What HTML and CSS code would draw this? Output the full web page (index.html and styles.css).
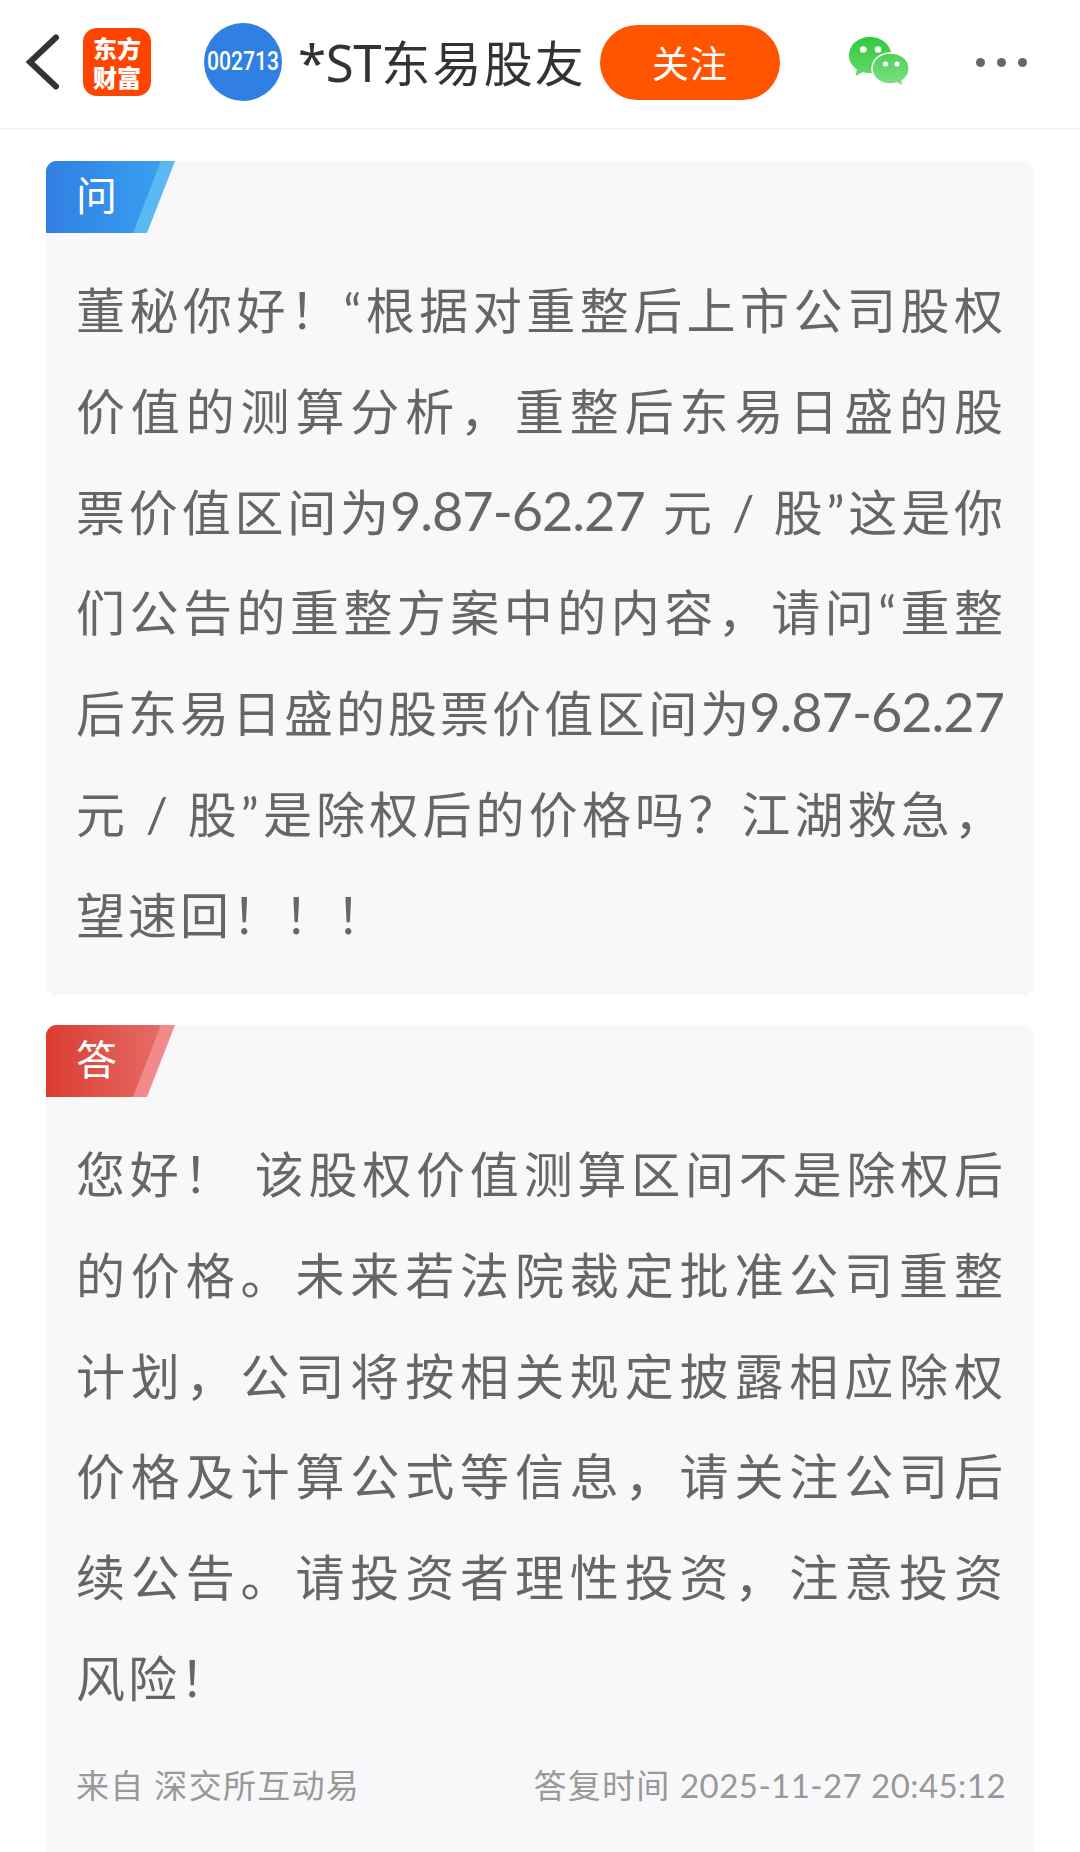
FILE: index.html
```html
<!DOCTYPE html>
<html lang="zh-CN">
<head>
  <meta charset="UTF-8">
  <title>*ST东易股友</title>
  <link rel="stylesheet" href="styles.css">
</head>
<body>
  <header class="topbar">
    <svg class="back" width="36" height="60" viewBox="0 0 36 60"><path d="M31 5.500 5 30l26 24.500" fill="none" stroke="#333" stroke-width="6" stroke-linecap="round" stroke-linejoin="miter"/></svg>
    <div class="logo"><span>东方</span><span>财富</span></div>
    <div class="avatar">
      <svg width="78" height="78" viewBox="0 0 78 78"><text x="3" y="47" textLength="72" lengthAdjust="spacingAndGlyphs">002713</text></svg>
    </div>
    <h1 class="name"><span class="st">*ST</span>东易股友</h1>
    <button class="follow">关注</button>
    <svg class="wechat" width="64" height="54" viewBox="0 0 64 54">
      <defs>
        <linearGradient id="g1" x1="0" y1="0" x2="0" y2="1"><stop offset="0" stop-color="#2fcb3c"/><stop offset="1" stop-color="#66d86c"/></linearGradient>
        <linearGradient id="g2" x1="0" y1="0" x2="0" y2="1"><stop offset="0" stop-color="#4fd05a"/><stop offset="1" stop-color="#7fe083"/></linearGradient>
      </defs>
      <path d="M23 2C11 2 2 10 2 20.500c0 6 3 10.500 8 14L8.500 41l7.500-4c2.500.7 4.500 1 7 1 12 0 21.500-7.500 21.500-17.500S35 2 23 2Z" fill="url(#g1)"/>
      <circle cx="16.300" cy="14.500" r="3.300" fill="#fff"/><circle cx="31" cy="14.500" r="3.300" fill="#fff"/>
      <path d="M43.500 18C33 18 25 24.800 25 33.500S33 49 43.500 49c2.300 0 4.300-.4 6.500-1l6.500 3.500-1.300-5.700c4.300-3 7-7.300 7-12.300C62.200 24.800 54 18 43.500 18Z" fill="url(#g2)" stroke="#fff" stroke-width="1.500"/>
      <circle cx="38.500" cy="29" r="2.600" fill="#fff"/><circle cx="50" cy="29" r="2.600" fill="#fff"/>
    </svg>
    <div class="more"><i></i><i></i><i></i></div>
  </header>

  <main>
    <section class="card">
      <svg class="tag" width="130" height="72" viewBox="0 0 130 72">
        <defs><linearGradient id="ask"><stop offset="0" stop-color="#317fe3"/><stop offset="1" stop-color="#389ff0"/></linearGradient></defs>
        <path d="M0 0h129l-28 72H0Z" fill="#5cb8f0"/><path d="M0 0h115L87 72H0Z" fill="url(#ask)"/>
        <text x="30" y="50">问</text>
      </svg>
      <div class="text">
        <p>董秘你好！“根据对重整后上市公司股权</p>
        <p>价值的测算分析，重整后东易日盛的股</p>
        <p>票价值区间为<span class="num">9.87-62.27</span> 元 / 股”这是你</p>
        <p>们公告的重整方案中的内容，请问“重整</p>
        <p>后东易日盛的股票价值区间为<span class="num">9.87-62.27</span></p>
        <p>元 / 股”是除权后的价格吗？江湖救急，</p>
        <p class="last">望速回！！！</p>
      </div>
    </section>

    <section class="card answer">
      <svg class="tag" width="130" height="72" viewBox="0 0 130 72">
        <defs><linearGradient id="ans"><stop offset="0" stop-color="#dc3c30"/><stop offset="1" stop-color="#e56c67"/></linearGradient></defs>
        <path d="M0 0h129l-28 72H0Z" fill="#f28a8b"/><path d="M0 0h115L87 72H0Z" fill="url(#ans)"/>
        <text x="30" y="50">答</text>
      </svg>
      <div class="text">
        <p>您好！ 该股权价值测算区间不是除权后</p>
        <p>的价格。未来若法院裁定批准公司重整</p>
        <p>计划，公司将按相关规定披露相应除权</p>
        <p>价格及计算公式等信息，请关注公司后</p>
        <p>续公告。请投资者理性投资，注意投资</p>
        <p class="last">风险！</p>
      </div>
      <footer class="meta">
        <span class="from">来自 深交所互动易</span>
        <span class="time">答复时间 <span class="date">2025-11-27 20:45:12</span></span>
      </footer>
    </section>
  </main>
</body>
</html>
```
FILE: styles.css
```css
* {
  box-sizing: border-box;
}

body {
  margin: 0;
  height: 1852px;
  overflow: hidden;
  background: #fff;
  color: #666;
  font-family: Lato, "Noto Sans CJK SC", sans-serif;
}

.topbar {
  display: flex;
  align-items: center;
  height: 130px;
  padding: 0 52px 4px 25px;
  border-bottom: 2px solid #f5f5f5;
}

.topbar > * {
  flex-shrink: 0;
}

.logo {
  display: flex;
  flex-direction: column;
  align-items: center;
  justify-content: center;
  width: 68px;
  height: 68px;
  margin-left: 22px;
  border-radius: 14px;
  background: #ff4400;
  color: #fff;
  font: 900 24px/29px "Noto Sans CJK SC", sans-serif;
}

.avatar {
  width: 78px;
  height: 78px;
  margin-left: 53px;
  border-radius: 50%;
  background: #307fe2;
}

.avatar text {
  fill: #fff;
  font: 500 26px Roboto, sans-serif;
}

.name {
  width: 302px;
  margin: 0 0 0 16px;
  color: #333;
  font-size: 49px;
  font-weight: 400;
  line-height: 70px;
  letter-spacing: 2.2px;
  white-space: nowrap;
}

.st {
  font-family: "Noto Sans", sans-serif;
  font-size: 51px;
  letter-spacing: -0.4px;
}

.follow {
  width: 180px;
  height: 75px;
  padding: 0;
  border: none;
  border-radius: 38px;
  background: #ff5500;
  color: #fff;
  font: 400 37px/75px "Noto Sans CJK SC", sans-serif;
  letter-spacing: 1px;
}

.wechat {
  margin-left: 67px;
}

.more {
  display: flex;
  gap: 12px;
  margin-left: 65px;
}

.more i {
  width: 9px;
  height: 9px;
  border-radius: 50%;
  background: #666;
}

main {
  display: flex;
  flex-direction: column;
  gap: 30px;
  padding: 31px 46px 0;
}

.card {
  height: 834px;
  border-radius: 11px;
  background: #f8f8fa;
  overflow: hidden;
}

.answer {
  height: 900px;
}

.tag {
  display: block;
}

.tag text {
  fill: #fff;
  font: 400 41px "Noto Sans CJK SC", sans-serif;
}

.text {
  padding: 27px 28px 0 30px;
  font-size: 49px;
  line-height: 100.8px;
  letter-spacing: 3px;
}

.text p {
  height: 100.8px;
  margin: 0;
  text-align: justify;
  text-align-last: justify;
  white-space: nowrap;
}

.text .last {
  text-align-last: left;
}

.num {
  margin: 0 2px 0 -3px;
  font-size: 54px;
  line-height: 1;
  letter-spacing: -1px;
}

.meta {
  display: flex;
  justify-content: space-between;
  padding: 31px 28px 0 30px;
  color: #999;
  font-size: 33px;
  line-height: 50px;
}

.from {
  letter-spacing: 1.3px;
}

.time {
  letter-spacing: 1.2px;
}

.date {
  letter-spacing: 0.45px;
}
```
